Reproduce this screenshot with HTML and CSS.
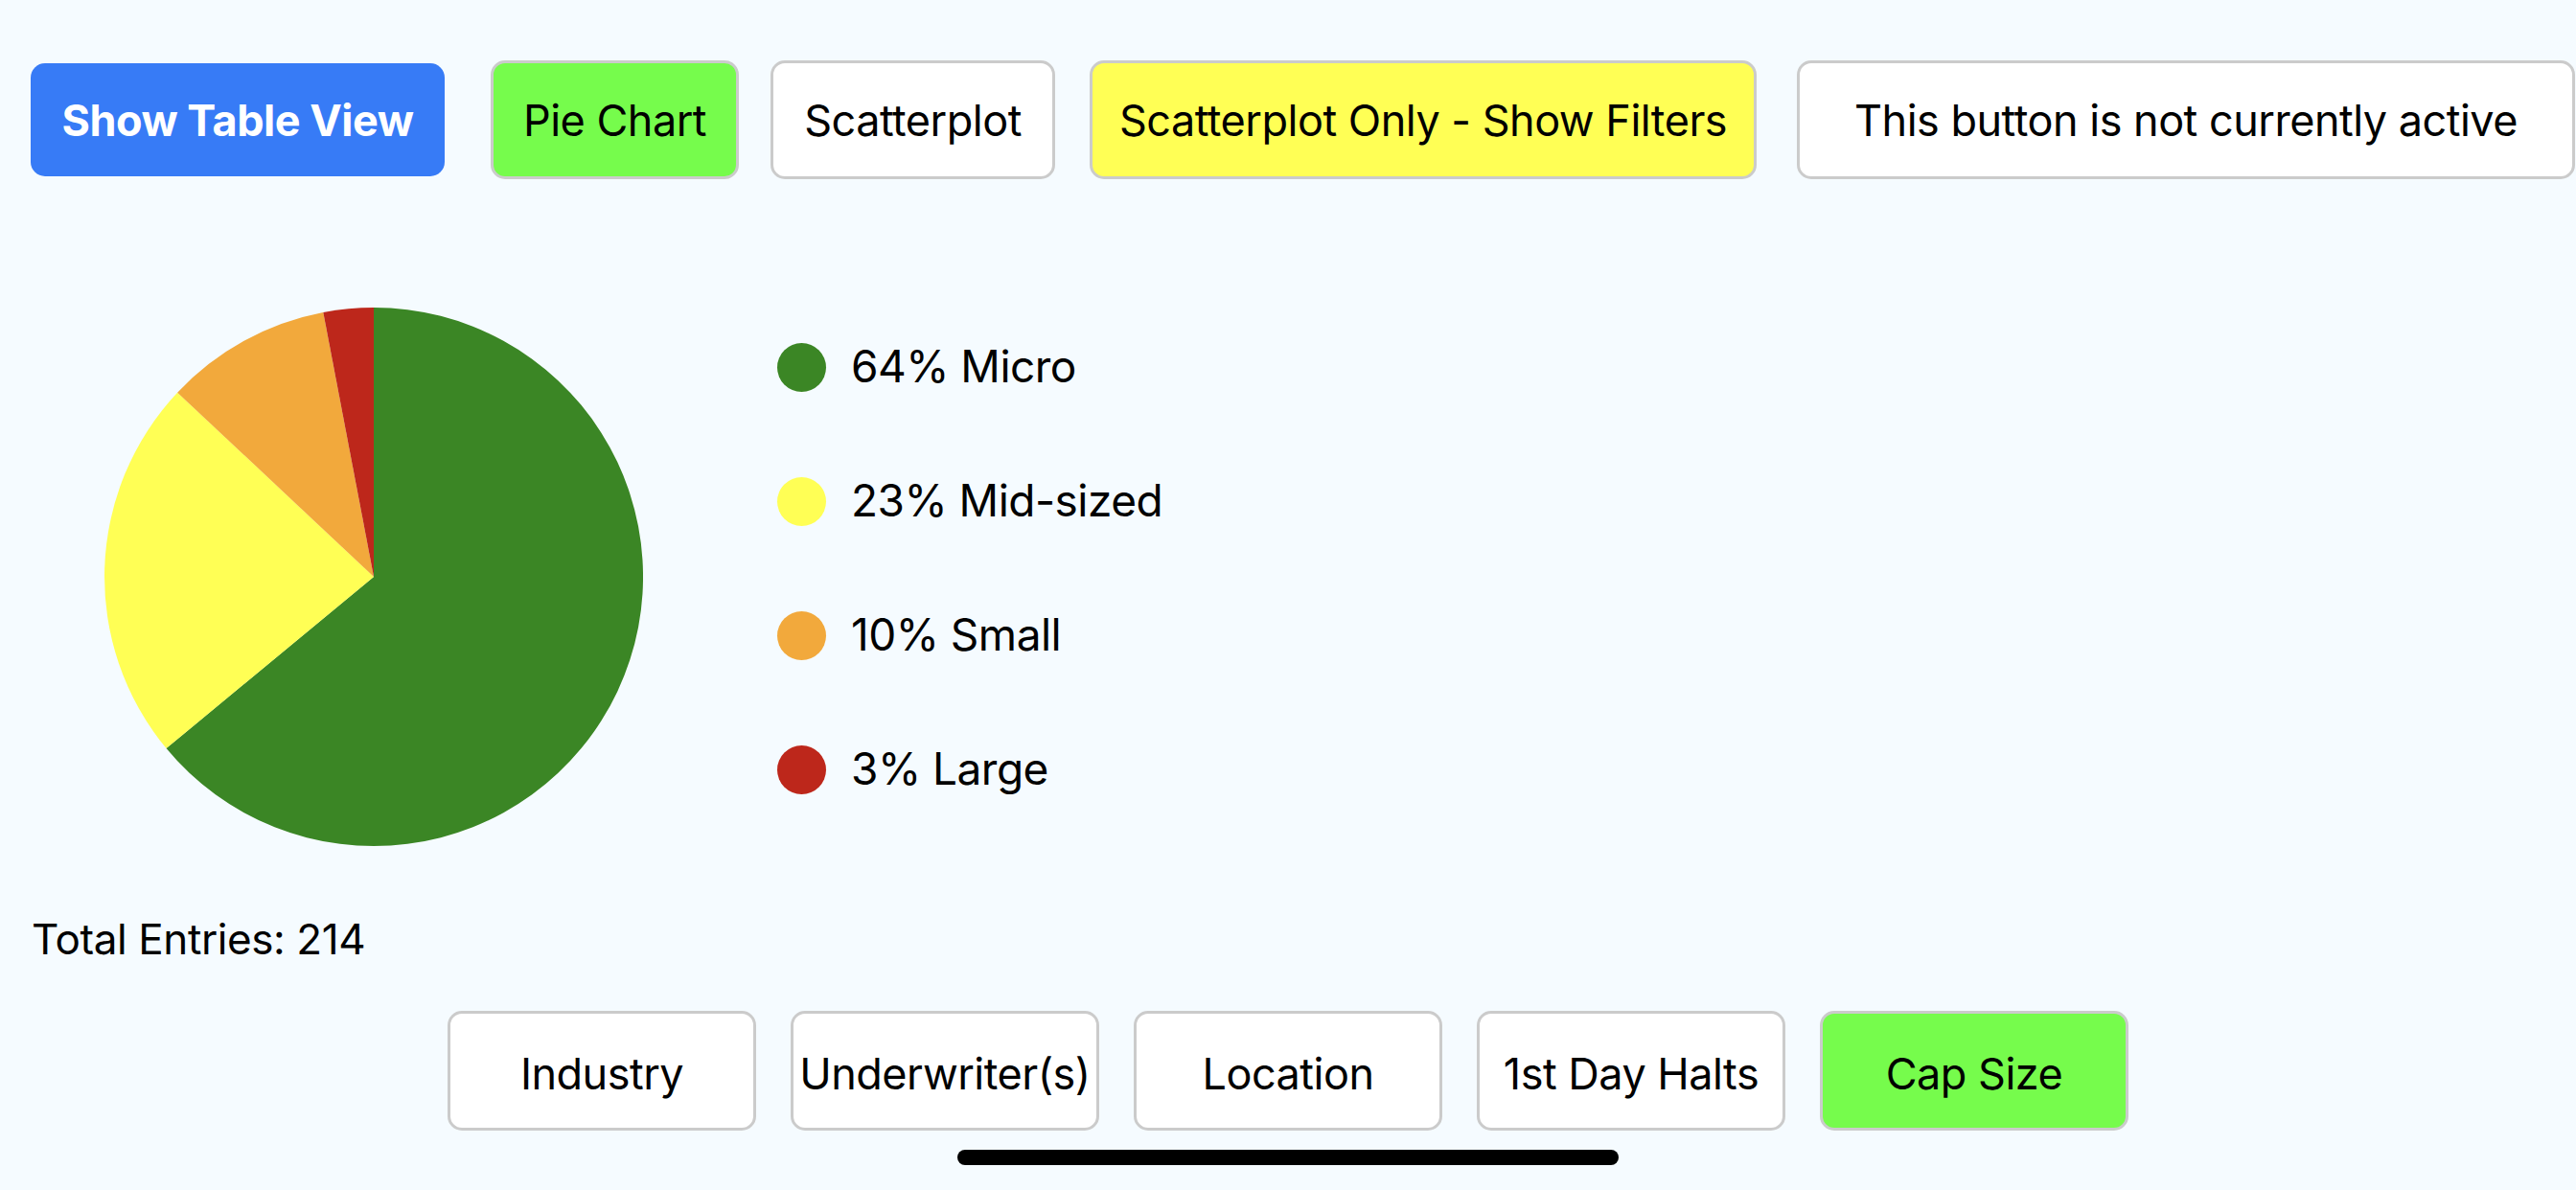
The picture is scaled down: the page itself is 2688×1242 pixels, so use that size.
FILE: index.html
```html
<!DOCTYPE html>
<html lang="en">
<head>
<meta charset="utf-8">
<title>Cap Size Pie Chart</title>
<link rel="stylesheet" href="styles.css">
</head>
<body>
<div class="page">
  <div class="toolbar">
    <button class="btn btn-primary btn-table">Show Table View</button>
    <button class="btn btn-green btn-pie">Pie Chart</button>
    <button class="btn btn-scatter">Scatterplot</button>
    <button class="btn btn-yellow btn-filters">Scatterplot Only - Show Filters</button>
    <button class="btn btn-inactive">This button is not currently active</button>
  </div>

  <div class="chart">
    <svg class="pie" width="562" height="562" viewBox="0 0 562 562">
      <path d="M281,281 L281,0 A281,281 0 1 1 64.5,460.1 Z" fill="#3b8625"/>
      <path d="M281,281 L64.5,460.1 A281,281 0 0 1 76.1,88.7 Z" fill="#ffff55"/>
      <path d="M281,281 L76.1,88.7 A281,281 0 0 1 228.3,5.0 Z" fill="#f2a93c"/>
      <path d="M281,281 L228.3,5.0 A281,281 0 0 1 281,0 Z" fill="#bd271b"/>
    </svg>
    <ul class="legend">
      <li class="legend-item"><span class="dot dot-micro"></span><span class="legend-label">64% Micro</span></li>
      <li class="legend-item"><span class="dot dot-mid"></span><span class="legend-label">23% Mid-sized</span></li>
      <li class="legend-item"><span class="dot dot-small"></span><span class="legend-label">10% Small</span></li>
      <li class="legend-item"><span class="dot dot-large"></span><span class="legend-label">3% Large</span></li>
    </ul>
  </div>

  <div class="total">Total Entries: 214</div>

  <div class="filters">
    <button class="btn btn-filter">Industry</button>
    <button class="btn btn-filter">Underwriter(s)</button>
    <button class="btn btn-filter">Location</button>
    <button class="btn btn-filter">1st Day Halts</button>
    <button class="btn btn-filter btn-green">Cap Size</button>
  </div>

  <div class="home-indicator"></div>
</div>
</body>
</html>
```

FILE: styles.css
```css
html, body {
  margin: 0;
  padding: 0;
}

body {
  background: #f5fbff;
  font-family: Inter, "Liberation Sans", Roboto, sans-serif;
  color: #000;
  width: 2688px;
  height: 1242px;
  overflow: hidden;
}

.page {
  display: flex;
  flex-direction: column;
  width: 2688px;
}

.btn {
  font-family: inherit;
  font-size: 45px;
  font-weight: 400;
  letter-spacing: -0.5px;
  color: #000;
  background: #ffffff;
  border: 3px solid #cbcbcb;
  border-radius: 15px;
  margin: 0;
  padding: 0;
  box-sizing: border-box;
  display: flex;
  align-items: center;
  justify-content: center;
  white-space: nowrap;
  flex: none;
}

.toolbar {
  display: flex;
  align-items: center;
  padding: 63px 0 0 32px;
  height: 124px;
  box-sizing: content-box;
}

.btn-table,
.btn-pie,
.btn-scatter,
.btn-filters,
.btn-inactive {
  height: 124px;
}

.btn-primary {
  background: #377bf6;
  border: none;
  color: #ffffff;
  font-weight: 700;
  height: 118px;
}

.btn-table { width: 432px; margin-right: 48px; }
.btn-pie { width: 259px; margin-right: 33px; }
.btn-scatter { width: 297px; margin-right: 36px; }
.btn-filters { width: 696px; margin-right: 42px; }
.btn-inactive { width: 812px; }

.btn-green { background: #76fc4c; }
.btn-yellow { background: #ffff55; }

.chart {
  display: flex;
  align-items: flex-start;
  margin-top: 134px;
  padding-left: 109px;
}

.pie {
  display: block;
  flex: none;
}

.legend {
  list-style: none;
  margin: -9px 0 0 140px;
  padding: 0;
  display: flex;
  flex-direction: column;
}

.legend-item {
  display: flex;
  align-items: center;
  height: 140px;
  gap: 26px;
}

.dot {
  width: 51px;
  height: 51px;
  border-radius: 50%;
  flex: none;
  margin-top: 3px;
}

.dot-micro { background: #3b8625; }
.dot-mid { background: #ffff55; }
.dot-small { background: #f2a93c; }
.dot-large { background: #bd271b; }

.legend-label {
  font-size: 46px;
  letter-spacing: -0.5px;
}

.total {
  margin-top: 70px;
  padding-left: 33px;
  font-size: 44px;
  line-height: 54px;
  letter-spacing: -0.4px;
}

.filters {
  display: flex;
  justify-content: center;
  gap: 36px;
  margin-top: 48px;
}

.btn-filter {
  width: 322px;
  height: 125px;
  padding-top: 6px;
}

.home-indicator {
  align-self: center;
  width: 690px;
  height: 16px;
  border-radius: 8px;
  background: #000;
  margin-top: 20px;
}
```
